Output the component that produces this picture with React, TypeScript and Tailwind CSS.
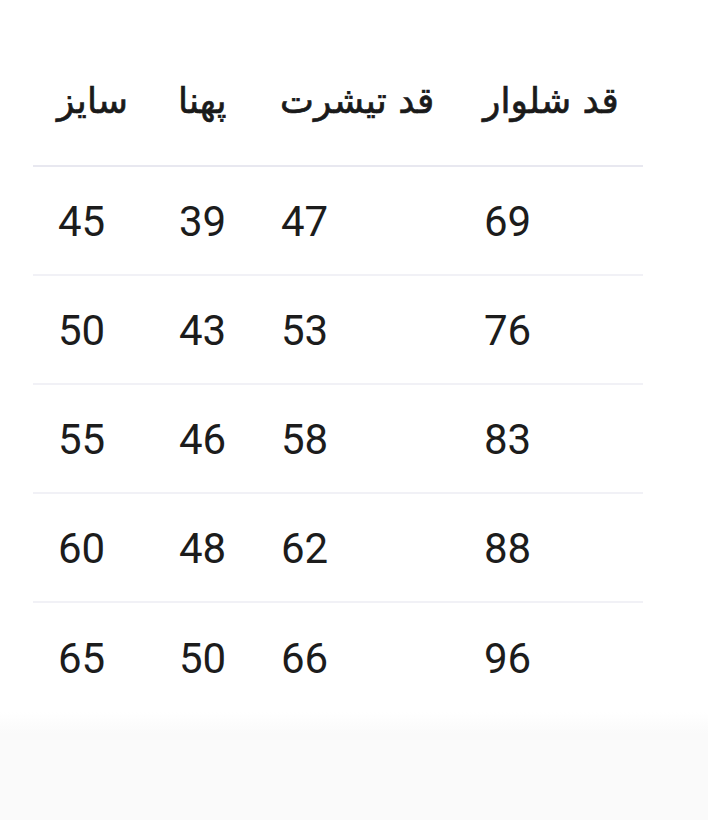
import React from "react";

const rows = [
  ["45", "39", "47", "69"],
  ["50", "43", "53", "76"],
  ["55", "46", "58", "83"],
  ["60", "48", "62", "88"],
  ["65", "50", "66", "96"],
];

const headers = ["سایز", "پهنا", "قد تیشرت", "قد شلوار"];

const cols = "grid grid-cols-[121px_102px_203px_160px]";

export default function App() {
  return (
    <div className="w-[708px] h-[820px] bg-white flex flex-col overflow-hidden">
      <div className="pl-[33px] w-[643px] h-[712px] shrink-0">
        <div
          className={`${cols} h-[167px] pt-[37px] items-center pl-[24px] border-b-2 border-[#e8e8f0]`}
          style={{ fontFamily: '"DejaVu Sans", sans-serif' }}
        >
          {headers.map((h) => (
            <div key={h} dir="rtl" className="text-left text-[36px] font-normal [-webkit-text-stroke:0.7px_#1a1a1a] text-[#1a1a1a] leading-none">
              {h}
            </div>
          ))}
        </div>
        {rows.map((r, i) => (
          <div
            key={i}
            className={`${cols} h-[109px] items-center pl-[25px] ${i < rows.length - 1 ? "border-b-2 border-[#f1f1f6]" : ""}`}
            style={{ fontFamily: 'Roboto, sans-serif' }}
          >
            {r.map((v, j) => (
              <div key={j} className="text-[42px] text-[#1c1c1c] leading-none pt-[2px]">
                {v}
              </div>
            ))}
          </div>
        ))}
      </div>
      <div className="h-[22px] shrink-0 bg-gradient-to-b from-white to-[#fafafa]" />
      <div className="flex-1 bg-[#fafafa]" />
    </div>
  );
}
